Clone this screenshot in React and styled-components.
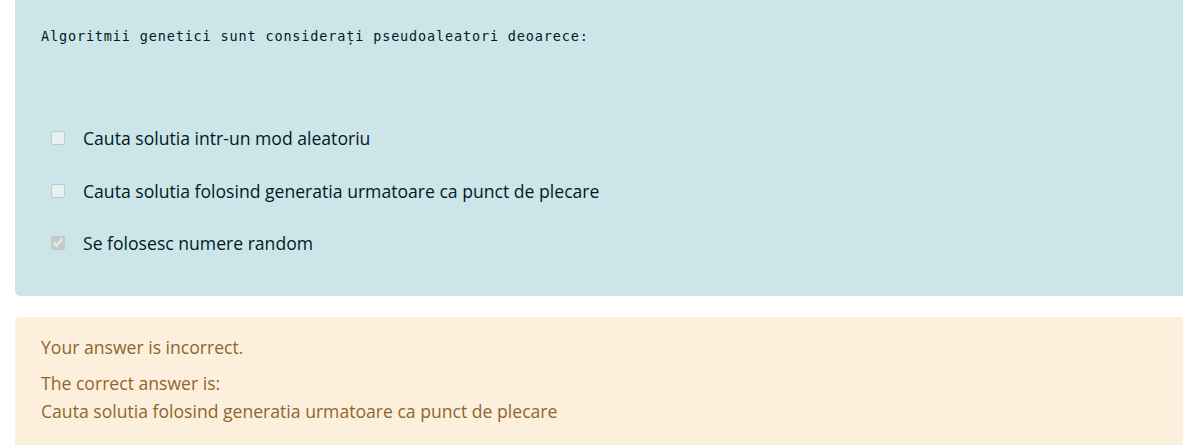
import React from "react";
import styled, { createGlobalStyle } from "styled-components";

const GlobalStyle = createGlobalStyle`
  body {
    margin: 0;
    background: #ffffff;
    overflow: hidden;
  }
`;

const StPage = styled.div`
  padding-left: 15px;
  margin-right: -20px;
`;

const StFormulation = styled.section`
  background-color: #cce5e9;
  color: #001a1e;
  padding: 27px 26px 39px 26px;
  border-radius: 0 0 0 5px;
`;

const StQuestion = styled.p`
  margin: 0 0 79px 0;
  font-family: "DejaVu Sans Mono", "Liberation Mono", monospace;
  font-size: 13.5px;
  letter-spacing: 0.85px;
  line-height: 18px;
`;

const StAnswers = styled.div`
  display: flex;
  flex-direction: column;
  gap: 24.5px;
  padding-left: 10px;
`;

const StOption = styled.label`
  display: flex;
  align-items: center;
  gap: 18px;
  font-family: "Open Sans", "Noto Sans", sans-serif;
  font-size: 17.6px;
  line-height: 28px;
`;

const StCheck = styled.input`
  width: 14px;
  height: 14px;
  margin: 0;
`;

const StFeedback = styled.section`
  margin-top: 21px;
  background-color: #fcefdc;
  color: #8e662e;
  padding: 16px 26px 20px 26px;
  border-radius: 5px 0 0 0;
  font-family: "Open Sans", "Noto Sans", sans-serif;
  font-size: 17.6px;
  line-height: 28px;
`;

const StLine = styled.div`
  margin-bottom: ${(p) => (p.$gap ? "8px" : "0")};
`;

const options = [
  { text: "Cauta solutia intr-un mod aleatoriu", checked: false },
  { text: "Cauta solutia folosind generatia urmatoare ca punct de plecare", checked: false },
  { text: "Se folosesc numere random", checked: true },
];

function App() {
  return (
    <>
      <GlobalStyle />
      <StPage>
        <StFormulation>
          <StQuestion>Algoritmii genetici sunt considerați pseudoaleatori deoarece:</StQuestion>
          <StAnswers>
            {options.map((o) => (
              <StOption key={o.text}>
                <StCheck type="checkbox" disabled defaultChecked={o.checked} />
                {o.text}
              </StOption>
            ))}
          </StAnswers>
        </StFormulation>
        <StFeedback>
          <StLine $gap>Your answer is incorrect.</StLine>
          <StLine>The correct answer is:</StLine>
          <StLine>Cauta solutia folosind generatia urmatoare ca punct de plecare</StLine>
        </StFeedback>
      </StPage>
    </>
  );
}

export default App;
